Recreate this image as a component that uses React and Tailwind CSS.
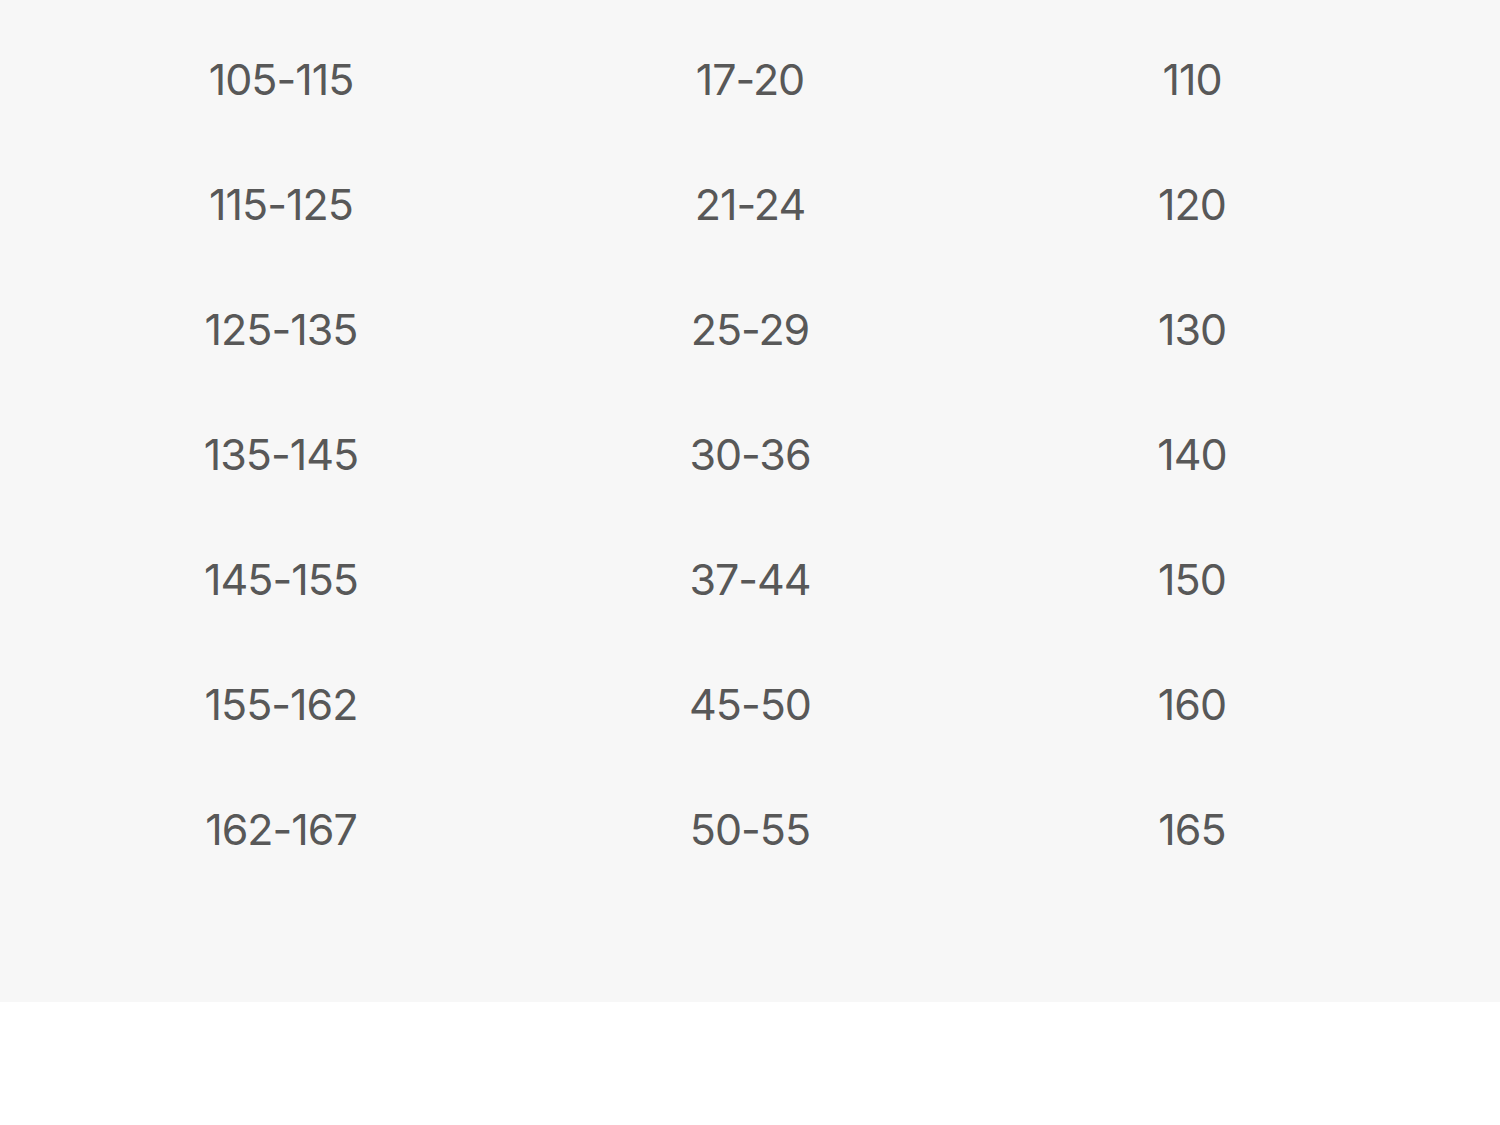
const rows = [
  ["105-115", "17-20", "110"],
  ["115-125", "21-24", "120"],
  ["125-135", "25-29", "130"],
  ["135-145", "30-36", "140"],
  ["145-155", "37-44", "150"],
  ["155-162", "45-50", "160"],
  ["162-167", "50-55", "165"],
];

export default function App() {
  return (
    <div className="min-h-screen bg-white" style={{ fontFamily: "Inter, 'Noto Sans', sans-serif" }}>
      <div className="bg-[#f7f7f7] h-[1002px] pt-[17px] pl-[62px]">
        {rows.map((r, i) => (
          <div key={i} className="grid grid-cols-[438px_500px_384px] h-[125px] items-center text-[#585858] text-[43px] tracking-[-1px]">
            {r.map((c, j) => (
              <div key={j} className="text-center">{c}</div>
            ))}
          </div>
        ))}
      </div>
    </div>
  );
}
